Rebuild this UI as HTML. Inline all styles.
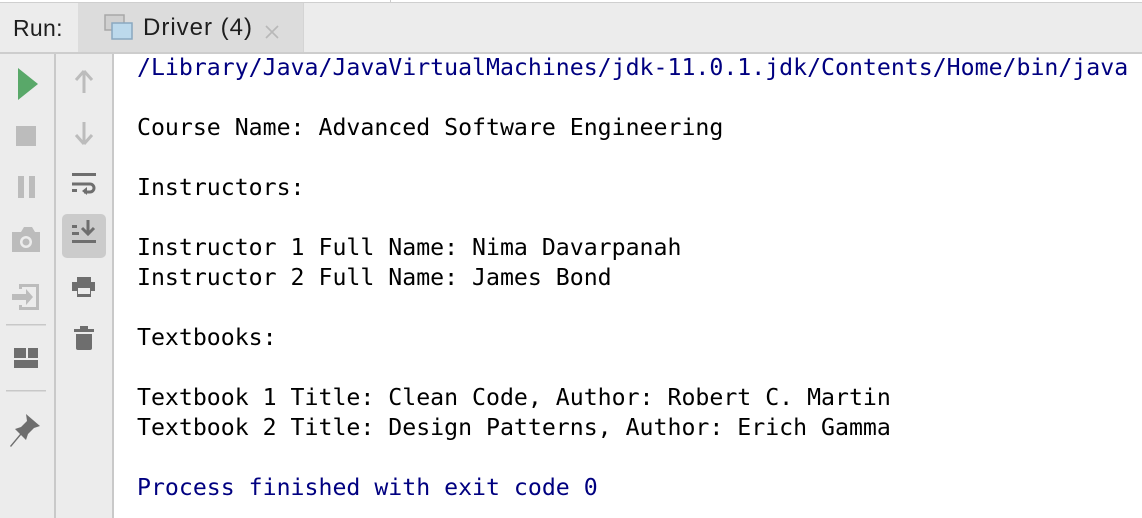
<!DOCTYPE html><html><head><style>
body{margin:0;width:1142px;height:518px;overflow:hidden;background:#fff;position:relative;font-family:"Liberation Sans",sans-serif}
.a{position:absolute}
.mono{font-family:"DejaVu Sans Mono","Liberation Mono",monospace;font-size:23.2px;line-height:30px;white-space:pre;color:#000}
</style></head><body>
<div class="a" style="left:0;top:0;width:1142px;height:3px;background:#fff"></div>
<div class="a" style="left:390px;top:0;width:1px;height:3px;background:#ccc"></div>
<div class="a" style="left:0;top:2px;width:1142px;height:1px;background:#cfcfcf"></div>
<div class="a" style="left:0;top:3px;width:1142px;height:49px;background:#ececec"></div>
<div class="a" style="left:78px;top:3px;width:225px;height:49px;background:#dcdcdc"></div>
<div class="a" style="left:303px;top:3px;width:1px;height:49px;background:#d4d4d4"></div>
<div class="a" style="left:0;top:52px;width:1142px;height:2px;background:#cdcdcd"></div>
<div class="a" style="left:13px;top:15px;font-size:23px;letter-spacing:0.3px;color:#1e1e1e">Run:</div>
<svg class="a" style="left:104px;top:14px" width="30" height="28"><rect x="1" y="1" width="19" height="15" fill="#d0d0d0" stroke="#a8a8a8" stroke-width="1.5"/><rect x="8" y="9" width="20" height="16" fill="#bcd9ec" stroke="#8aa8c0" stroke-width="1.5"/></svg>
<div class="a" style="left:143px;top:14px;font-size:24px;letter-spacing:1px;color:#1e1e1e">Driver (4)</div>
<svg class="a" style="left:265px;top:25px" width="14" height="14"><path d="M1 1L13 13M13 1L1 13" stroke="#b8b8b8" stroke-width="1.6"/></svg>
<div class="a" style="left:0;top:54px;width:54px;height:464px;background:#ececec"></div>
<div class="a" style="left:54px;top:54px;width:2px;height:464px;background:#c9c9c9"></div>
<div class="a" style="left:56px;top:54px;width:56px;height:464px;background:#ececec"></div>
<div class="a" style="left:112px;top:54px;width:2px;height:464px;background:#c9c9c9"></div>
<svg class="a" style="left:0;top:54px" width="114" height="420">
<path d="M18 14L38 30L18 46Z" fill="#59a869"/>
<rect x="16" y="72" width="20" height="20" fill="#bcbcbc"/>
<rect x="18" y="122" width="6" height="22" fill="#bcbcbc"/><rect x="29" y="122" width="6" height="22" fill="#bcbcbc"/>
<path d="M12 178h9l3-5h8l3 5h5v20h-28z" fill="#bcbcbc"/><circle cx="26" cy="188" r="6" fill="#ececec"/><circle cx="26" cy="188" r="3.5" fill="#bcbcbc"/>
<path d="M19 230h20v26h-20v-5h3v2h14v-20h-14v2h-3z" fill="#bcbcbc"/><path d="M12 240h14v-5l7 8l-7 8v-5h-14z" fill="#bcbcbc"/>
<rect x="6" y="270" width="40" height="1.5" fill="#c8c8c8"/>
<rect x="14" y="294" width="12" height="10" fill="#6e6e6e"/><rect x="28" y="294" width="10" height="10" fill="#6e6e6e"/><rect x="14" y="306" width="24" height="8" fill="#6e6e6e"/>
<rect x="6" y="336" width="40" height="1.5" fill="#c8c8c8"/>
<path d="M26 360l14 12l-6 2l-6 6l-2 6l-5-5l-10 12l-1-1l10-12l-5-5l6-2l6-6z" fill="#6e6e6e"/>
<path d="M84 17l-8 9M84 17l8 9M84 17v22" stroke="#bcbcbc" stroke-width="3" fill="none"/>
<path d="M84 90l-8-9M84 90l8-9M84 90v-22" stroke="#bcbcbc" stroke-width="3" fill="none"/>
<rect x="72" y="119" width="24" height="3" fill="#6e6e6e"/><path d="M72 130h18a4 4 0 0 1 0 8h-6" stroke="#6e6e6e" stroke-width="3" fill="none"/><rect x="72" y="135" width="5" height="3" fill="#6e6e6e"/><path d="M82 137l5-4v8z" fill="#6e6e6e"/>
<rect x="62" y="160" width="44" height="44" rx="5" fill="#cbcbcb"/>
<rect x="72" y="171" width="5" height="3" fill="#6e6e6e"/><rect x="72" y="178" width="7" height="3" fill="#6e6e6e"/><rect x="72" y="186" width="24" height="3" fill="#6e6e6e"/><path d="M88 166v13M82 174l6 6l6-6" stroke="#6e6e6e" stroke-width="3" fill="none"/>
<path d="M77 223h14v5h4v9h-4v6h-14v-6h-5v-9h5z" fill="#6e6e6e"/><rect x="78" y="234" width="12" height="6" fill="#ececec"/>
<rect x="74" y="275" width="20" height="3" fill="#6e6e6e"/><rect x="80" y="272" width="8" height="3" fill="#6e6e6e"/><path d="M76 280h16v14a2 2 0 0 1-2 2h-12a2 2 0 0 1-2-2z" fill="#6e6e6e"/>
</svg>
<div class="a mono" style="left:137px;top:53px"><span style="color:#000080">/Library/Java/JavaVirtualMachines/jdk-11.0.1.jdk/Contents/Home/bin/java</span>

Course Name: Advanced Software Engineering

Instructors:

Instructor 1 Full Name: Nima Davarpanah
Instructor 2 Full Name: James Bond

Textbooks:

Textbook 1 Title: Clean Code, Author: Robert C. Martin
Textbook 2 Title: Design Patterns, Author: Erich Gamma

<span style="color:#000080">Process finished with exit code 0</span></div>
</body></html>
